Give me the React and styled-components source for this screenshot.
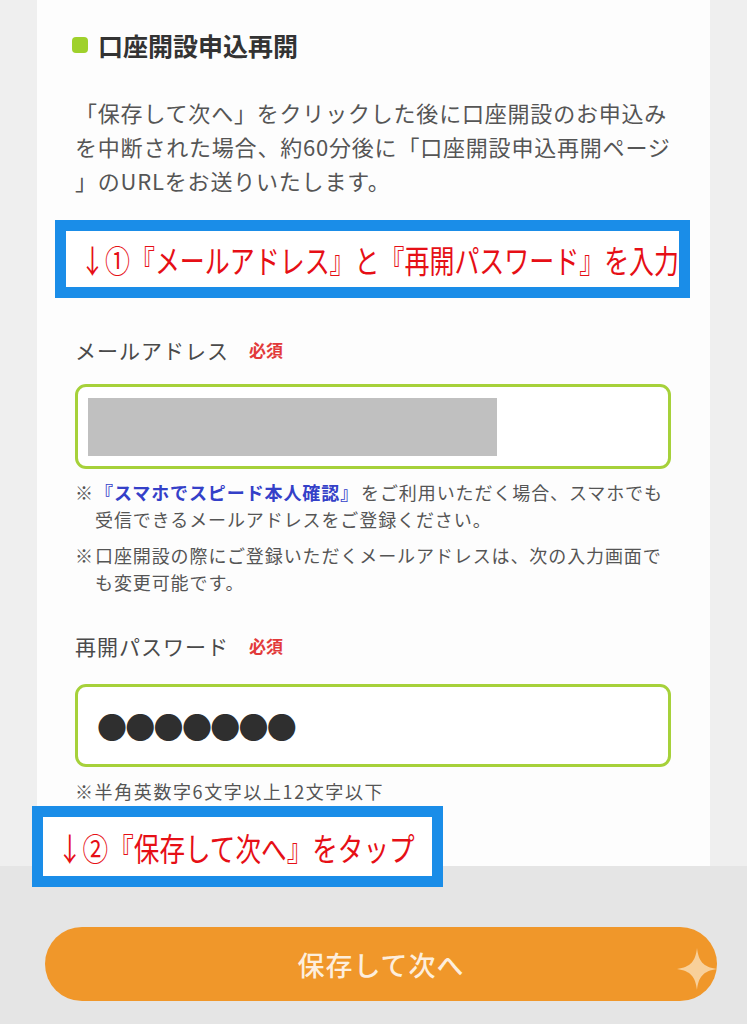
import React from "react";
import styled, { createGlobalStyle } from "styled-components";

const Global = createGlobalStyle`
  html, body { margin: 0; padding: 0; }
  body {
    background: #efefef;
    font-family: "Noto Sans CJK JP", "Noto Sans", sans-serif;
    color: #555;
    overflow: hidden;
  }
`;

const Page = styled.div`
  width: 747px;
  height: 1024px;
  display: flex;
  flex-direction: column;
  overflow: hidden;
`;

const Card = styled.section`
  position: relative;
  margin: 0 37px;
  background: #fdfdfd;
  padding: 30px 39px 63px 38px;
  display: flex;
  flex-direction: column;
`;

const Heading = styled.h2`
  margin: 0;
  display: flex;
  align-items: center;
  gap: 10px;
  font-size: 25px;
  line-height: 30px;
  font-weight: 700;
  color: #333;
  &::before {
    content: "";
    width: 16px;
    height: 16px;
    border-radius: 4px;
    background: #9fd12c;
    margin-left: -3px;
  }
`;

const Lead = styled.p`
  margin: 35px 0 0;
  font-size: 22px;
  line-height: 34px;
  letter-spacing: 0.8px;
  color: #555;
`;

const Callout = styled.div`
  box-sizing: border-box;
  border: 11px solid #1a8de8;
  background: #fff;
  height: 78px;
  display: flex;
  align-items: center;
  padding-left: 14px;
  overflow: hidden;
  white-space: nowrap;
`;

const CalloutText = styled.span`
  display: inline-block;
  font-size: 32px;
  line-height: 1;
  color: #e60f16;
  transform: scaleX(${(p) => p.$scale});
  transform-origin: left center;
`;

const TopCallout = styled(Callout)`
  margin: 23px -19px 0 -20px;
`;

const BottomCallout = styled(Callout)`
  position: absolute;
  left: -5px;
  bottom: -21px;
  width: 411px;
  height: 81px;
`;

const Field = styled.div`
  margin-top: ${(p) => p.$top}px;
  display: flex;
  flex-direction: column;
`;

const Label = styled.div`
  display: flex;
  align-items: center;
  gap: 20px;
  font-size: 21px;
  line-height: 30px;
  letter-spacing: 1px;
  color: #4a4a4a;
`;

const Required = styled.span`
  font-size: 17px;
  font-weight: 700;
  color: #e23a3a;
  letter-spacing: 0;
`;

const Input = styled.div`
  margin-top: ${(p) => p.$gap}px;
  height: ${(p) => p.$h}px;
  box-sizing: border-box;
  border: 3px solid #a6d13a;
  border-radius: 11px;
  background: #fff;
  display: flex;
  align-items: center;
  padding: 0 10px;
`;

const Masked = styled.div`
  width: 409px;
  height: 58px;
  background: #c0c0c0;
`;

const Dots = styled.span`
  font-size: 30px;
  letter-spacing: -1.7px;
  color: #2f2f2f;
  padding-left: 9px;
  line-height: 1;
`;

const Notes = styled.div`
  margin-top: 10px;
  display: flex;
  flex-direction: column;
  gap: 9px;
`;

const Note = styled.div`
  display: flex;
  font-size: 18px;
  line-height: 27px;
  letter-spacing: 0.9px;
  color: #555;
`;

const Mark = styled.span`
  flex: none;
  width: 20px;
`;

const NoteBody = styled.p`
  margin: 0;
  flex: 1;
`;

const Link = styled.span`
  color: #3440c8;
  font-weight: 700;
  margin-right: 2px;
`;

const Hint = styled.p`
  margin: 12px 0 0;
  font-size: 18px;
  line-height: 24px;
  letter-spacing: 1.6px;
  color: #555;
`;

const Footer = styled.footer`
  flex: 1;
  background: #e5e5e5;
  padding: 61px 30px 0 45px;
`;

const Button = styled.button`
  position: relative;
  width: 672px;
  height: 74px;
  border: none;
  border-radius: 37px;
  background: #f0972a;
  color: #fdeedd;
  font-family: "Noto Sans CJK JP", sans-serif;
  font-size: 27px;
  font-weight: 500;
  letter-spacing: 1px;
  display: flex;
  align-items: center;
  justify-content: center;
  padding: 0;
`;

const Sparkle = styled.svg`
  position: absolute;
  right: 0;
  top: 21px;
  width: 40px;
  height: 42px;
`;

export default function App() {
  return (
    <Page>
      <Global />
      <Card>
        <Heading>口座開設申込再開</Heading>
        <Lead>
          「保存して次へ」をクリックした後に口座開設のお申込み
          <br />
          を中断された場合、約60分後に「口座開設申込再開ページ
          <br />
          」のURLをお送りいたします。
        </Lead>

        <TopCallout>
          <CalloutText $scale={0.78}>
            ↓①『メールアドレス』と『再開パスワード』を入力
          </CalloutText>
        </TopCallout>

        <Field $top={37}>
          <Label>
            メールアドレス<Required>必須</Required>
          </Label>
          <Input $gap={19} $h={85}>
            <Masked />
          </Input>
          <Notes>
            <Note>
              <Mark>※</Mark>
              <NoteBody>
                <Link>『スマホでスピード本人確認』</Link>
                <span>をご利用いただく場合、スマホでも</span>
                <br />
                <span>受信できるメールアドレスをご登録ください。</span>
              </NoteBody>
            </Note>
            <Note>
              <Mark>※</Mark>
              <NoteBody>
                口座開設の際にご登録いただくメールアドレスは、次の入力画面でも変更可能です。
              </NoteBody>
            </Note>
          </Notes>
        </Field>

        <Field $top={35}>
          <Label>
            再開パスワード<Required>必須</Required>
          </Label>
          <Input $gap={23} $h={83}>
            <Dots>●●●●●●●</Dots>
          </Input>
          <Hint>※半角英数字6文字以上12文字以下</Hint>
        </Field>

        <BottomCallout>
          <CalloutText $scale={0.8}>↓②『保存して次へ』をタップ</CalloutText>
        </BottomCallout>
      </Card>

      <Footer>
        <Button>
          保存して次へ
          <Sparkle viewBox="0 0 40 42" aria-hidden="true">
            <path
              d="M20 0 C21.5 13 26 19 40 21 C26 23 21.5 29 20 42 C18.5 29 14 23 0 21 C14 19 18.5 13 20 0 Z"
              fill="#f8d09a"
            />
          </Sparkle>
        </Button>
      </Footer>
    </Page>
  );
}
